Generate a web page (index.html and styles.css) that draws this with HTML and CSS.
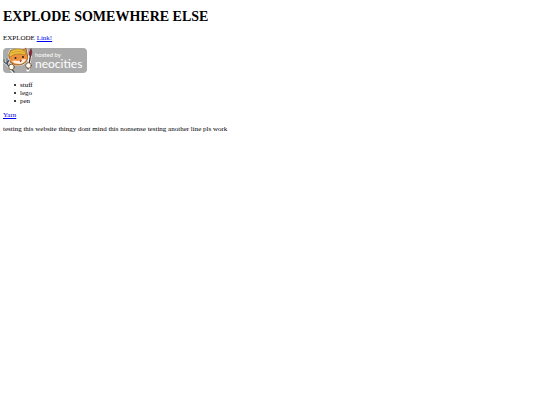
FILE: index.html
```html
<!DOCTYPE html>
<html lang="en">
<head>
<meta charset="utf-8">
<title>Explode somewhere else</title>
<link rel="stylesheet" href="styles.css">
</head>
<body>
<h1>EXPLODE SOMEWHERE ELSE</h1>
<p class="intro">EXPLODE <a href="#link">Link!</a></p>
<a class="badge" href="#host">
<svg class="cat" viewBox="0 0 31 25" aria-hidden="true">
  <g stroke-linecap="round" stroke-linejoin="round">
    <path d="M6 6 8 2 12 2 17 1 20 2 23 0 24 5 25 10 23 14 18 17 12 17 7 14 6 10z" fill="#f0a050" stroke="#fff" stroke-width="2"/>
    <path d="M6 6 8 2 12 2 17 1 20 2 23 0 24 5 25 10 23 14 18 17 12 17 7 14 6 10z" fill="#ed9140" stroke="#7c4a1c" stroke-width=".8"/>
    <path d="M6 7Q6 2 13 1Q20 0 23 5L22 7Q13 4 7 9z" fill="#efbd3d" stroke="#94701c" stroke-width=".6"/>
    <path d="M8 5Q14 2 21 4" fill="none" stroke="#c0922a" stroke-width=".6"/>
    <path d="M9 13Q12 12 15 13Q19 11 23 11Q22 15 17 16Q11 16 9 13z" fill="#fff0e0"/>
    <circle cx="12.500" cy="10" r="1" fill="#2b1c12"/>
    <circle cx="20" cy="9" r="1" fill="#2b1c12"/>
    <path d="M16.500 12h2.500l-1 2h-1z" fill="#b8402f"/>
    <path d="M1 11v3l3 2 6 8M4 10v6M6 12l-2 4" fill="none" stroke="#fff" stroke-width="2.200"/>
    <path d="M1 11v3l3 2 7 8M4 10v6M6 12l-2 4" fill="none" stroke="#46515b" stroke-width="1.300"/>
    <path d="M27.500 4 26 18 25 22" fill="none" stroke="#fff" stroke-width="3"/>
    <path d="M27.500 7 26 17 25 21" fill="none" stroke="#4d2924" stroke-width="1.400"/>
    <path d="M28 1Q30 4 28 8L26 7Q26 3 28 1z" fill="#8b2638" stroke="#55202a" stroke-width=".5"/>
    <circle cx="8.500" cy="19" r="2.800" fill="#fffaf0" stroke="#604020" stroke-width=".8"/>
    <circle cx="25.500" cy="17.500" r="2.800" fill="#fffaf0" stroke="#604020" stroke-width=".8"/>
  </g>
</svg>
<span class="host"><span class="by">hosted by</span><span class="name">neocities</span></span>
</a>
<ul>
<li>stuff</li>
<li>lego</li>
<li>pen</li>
</ul>
<a href="#yarn">Yarn</a>
<p>testing this website thingy dont mind this nonsense testing another line pls work</p>
</body>
</html>
```
FILE: styles.css
```css
body {
  margin: 9px 3px;
  font: 7px/8px "Liberation Serif", serif;
  color: #000;
  background: #fff;
}
h1 {
  margin: 0 0 9px;
  font-size: 14px;
  line-height: 16px;
}
p {
  margin: 6px 0;
}
.intro {
  margin: 0 0 6px;
}
a {
  color: #00e;
}
.badge {
  display: flex;
  width: max-content;
  height: 25px;
  padding-right: 5px;
  border-radius: 4px;
  background: #aaa;
  color: #fff;
  text-decoration: none;
  font-family: Lato, sans-serif;
}
.cat {
  width: 31px;
  height: 25px;
  overflow: visible;
}
.host {
  display: flex;
  flex-direction: column;
  padding: 3px 0 0 1px;
}
.by {
  font-size: 6px;
  line-height: 8px;
}
.name {
  font-size: 12px;
  line-height: 9px;
}
ul {
  margin: 8px 0 6px;
  padding-left: 11px;
  list-style: none;
}
li {
  display: flex;
  align-items: center;
  gap: 4px;
}
li::before {
  content: "";
  width: 2px;
  height: 2px;
  border-radius: 1px;
  background: #000;
}
```
